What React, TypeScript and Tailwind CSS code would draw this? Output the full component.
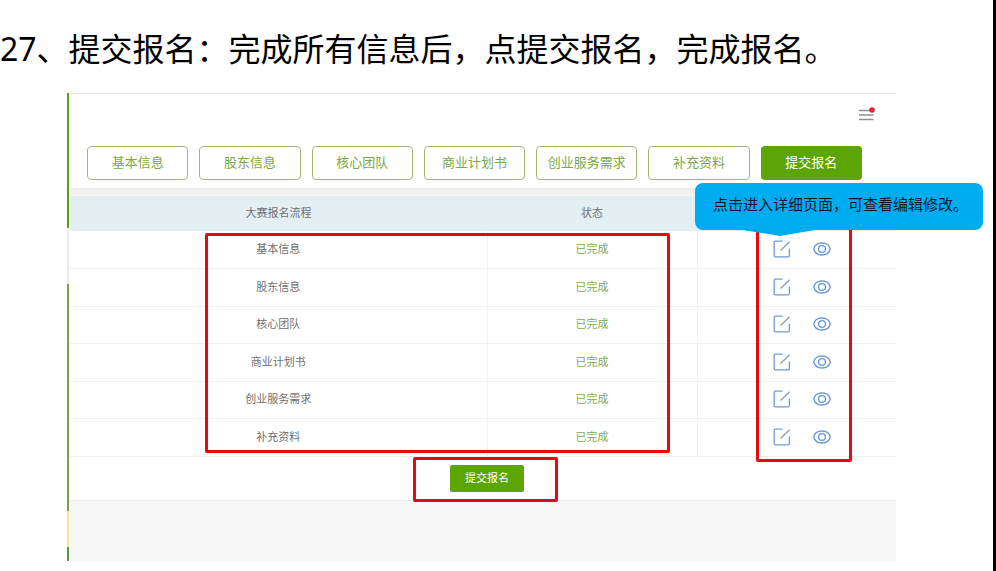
import React from 'react';

const steps = ['基本信息', '股东信息', '核心团队', '商业计划书', '创业服务需求', '补充资料'];

const EditIcon: React.FC = () => (
  <svg width="18" height="18" viewBox="0 0 18 18" fill="none" stroke="#6d9bd6" strokeWidth="1.3">
    <path d="M9.5 1.2H2.2Q1.2 1.2 1.2 2.2V15.8Q1.2 16.8 2.2 16.8H15.4Q16.4 16.8 16.4 15.8V8.5" />
    <path d="M7.5 10.5L16.6 1.8" stroke="#8d9dab" />
  </svg>
);

const EyeIcon: React.FC = () => (
  <svg width="18" height="14" viewBox="0 0 18 14" fill="none" stroke="#6598dc" strokeWidth="1.3">
    <path d="M0.8 7C1.6 3 4.8 1 9 1S16.4 3 17.2 7C16.4 11 13.2 13 9 13S1.6 11 0.8 7Z" />
    <circle cx="9" cy="7" r="3.4" />
  </svg>
);

const MenuIcon: React.FC = () => (
  <svg width="18" height="16" viewBox="0 0 18 16" fill="none">
    <path d="M1 4.5H15.5M1 9H15.5M1 13.5H15.5" stroke="#8e8e8e" strokeWidth="1.4" />
    <circle cx="14" cy="4" r="2.8" fill="#e0262f" />
  </svg>
);

const Rail: React.FC = () => (
  <div className="flex w-[3px] shrink-0 flex-col pr-px">
    <div className="h-[135px] bg-[#5f9c1c]" />
    <div className="h-14 bg-[#ececec]" />
    <div className="flex-1 bg-[#7d9f4c]" />
    <div className="h-9 bg-[#f3e98a]" />
    <div className="h-3.5 bg-[#5f9440]" />
  </div>
);

const App: React.FC = () => {
  return (
    <div className="min-h-screen border-r-[3px] border-black bg-white pb-2.5 font-['Noto_Sans','Noto_Sans_CJK_SC',sans-serif]">
      <h1 className="pt-[25px] pb-5 text-[32px] leading-[48px] text-black">
        27、提交报名：完成所有信息后，点提交报名，完成报名。
      </h1>

      <main className="mr-[97px] ml-[67px] flex">
        <Rail />
        <div className="min-w-0 flex-1 border-t border-[#e2e2e2]">
          <header className="flex justify-end pt-3 pr-5">
            <button type="button" aria-label="菜单">
              <MenuIcon />
            </button>
          </header>

          <nav className="grid grid-cols-7 gap-[11px] pt-6 pr-[34px] pb-2 pl-[17px] text-[13px]">
            {steps.map((step) => (
              <button
                key={step}
                type="button"
                className="h-[34px] rounded border border-[#a3b878] bg-white whitespace-nowrap text-[#7ba843]"
              >
                {step}
              </button>
            ))}
            <button type="button" className="h-[34px] rounded bg-[#5ba505] whitespace-nowrap text-white">
              提交报名
            </button>
          </nav>

          <div className="h-2 bg-linear-to-b from-[#ebebeb] to-[#f4f7f7]" />

          <section className="relative">
            <table className="w-full table-fixed border-collapse text-center text-[11px] text-[#6f6f6f]">
              <colgroup>
                <col />
                <col className="w-[210px]" />
                <col className="w-[199px]" />
              </colgroup>
              <thead>
                <tr className="h-[35px] bg-[#e4eff3]">
                  <th className="font-normal">大赛报名流程</th>
                  <th className="font-normal">状态</th>
                  <td />
                </tr>
              </thead>
              <tbody>
                {steps.map((step) => (
                  <tr key={step} className="border-b border-[#efefef] odd:h-[37px] even:h-[38px]">
                    <td className="border-r border-[#f1f1f1]">{step}</td>
                    <td className="border-r border-[#f1f1f1] text-[#82ab4c]">已完成</td>
                    <td>
                      <div className="flex items-center justify-center gap-[22px] pb-px pl-2.5">
                        <button type="button" aria-label={`编辑${step}`}>
                          <EditIcon />
                        </button>
                        <button type="button" aria-label={`查看${step}`}>
                          <EyeIcon />
                        </button>
                      </div>
                    </td>
                  </tr>
                ))}
              </tbody>
            </table>

            {/* highlight frames over the table */}
            <div className="pointer-events-none absolute top-[37px] right-[226px] bottom-1 left-[135px] rounded-xs border-3 border-[#e8090f]" />
            <div className="pointer-events-none absolute top-7 right-11 -bottom-[5px] w-24 rounded-xs border-3 border-[#e8090f]" />

            <div className="absolute -top-[13px] -right-[87px] flex h-[47px] w-72 items-center rounded-lg bg-[#00acf0] pb-1 pl-[18px] text-[15px] whitespace-nowrap text-[#06182c]">
              点击进入详细页面，可查看编辑修改。
              <svg className="absolute top-full left-12" width="72" height="6" viewBox="0 0 72 6">
                <path d="M0 0H72L37 6Z" fill="#00acf0" />
              </svg>
            </div>
          </section>

          <footer className="relative flex h-11 items-center justify-center border-b border-[#ededed] pl-2">
            <button type="button" className="h-[27px] w-[74px] rounded-xs bg-[#5ba505] text-[11px] text-white">
              提交报名
            </button>
            <div className="pointer-events-none absolute inset-x-0 top-0 -bottom-[2px] flex justify-center pl-[5px]">
              <div className="w-[145px] rounded-xs border-3 border-[#e8090f]" />
            </div>
          </footer>

          <div className="h-[60px] bg-[#f7f7f8]" />
        </div>
      </main>
    </div>
  );
};

export default App;
